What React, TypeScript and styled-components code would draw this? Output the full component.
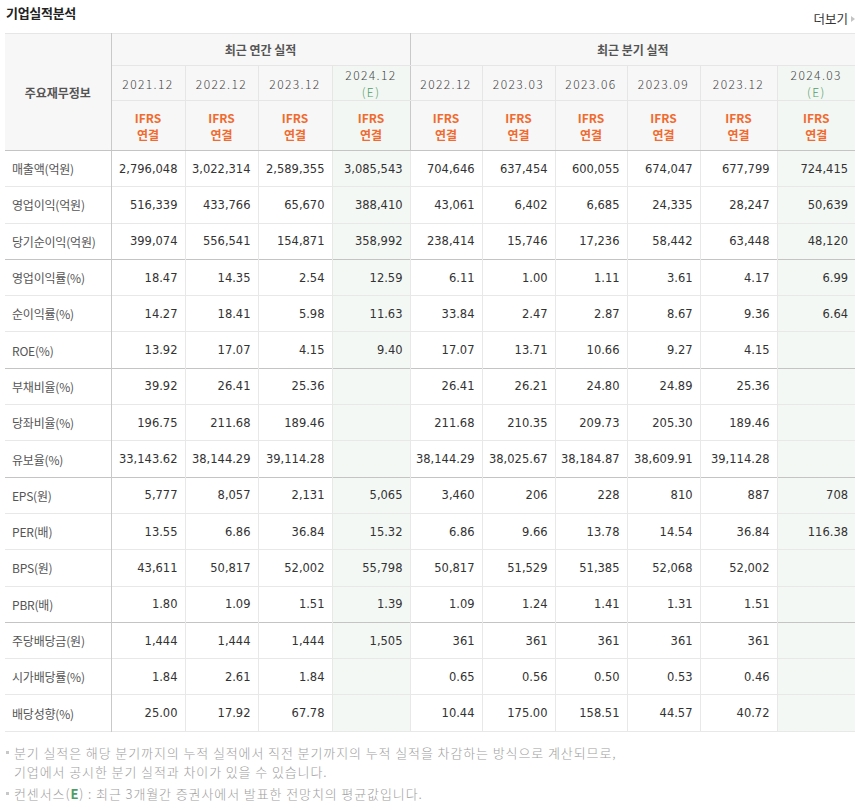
import { createGlobalStyle, styled } from 'styled-components';

const GlobalStyle = createGlobalStyle`
  body {
    margin: 0;
    background: #fff;
    font-family: "Noto Sans CJK KR", "DejaVu Sans", sans-serif;
  }
`;

const Wrapper = styled.div`
  width: 850px;
  padding: 0 3px 0 5px;
`;

const TopBar = styled.div`
  height: 33px;
  display: flex;
  justify-content: space-between;
  align-items: flex-start;
`;

const Title = styled.h3`
  margin: 3px 0 0 1px;
  font-size: 13px;
  font-weight: 700;
  color: #222;
  letter-spacing: -0.3px;
`;

const MoreLink = styled.a`
  margin-top: 9px;
  display: flex;
  align-items: center;
  gap: 3px;
  font-size: 12.5px;
  color: #333;
  text-decoration: none;
`;

const MoreArrow = styled.span`
  width: 0;
  height: 0;
  border-top: 3px solid transparent;
  border-bottom: 3px solid transparent;
  border-left: 4px solid #c4c4c4;
`;

const Table = styled.table`
  width: 850px;
  table-layout: fixed;
  border-collapse: collapse;
  border-top: 1px solid #c4c4c4;
  border-bottom: 1px solid #c4c4c4;
`;

const HeadCell = styled.th<{ $est?: boolean; $divider?: boolean; $bottom?: boolean }>`
  background: ${(p) => (p.$est ? '#f2f7f3' : '#f7f7f7')};
  border: 1px solid #e6e6e6;
  border-right-color: ${(p) => (p.$divider ? '#c9c9c9' : '#e6e6e6')};
  border-bottom-color: ${(p) => (p.$bottom ? '#c4c4c4' : '#e6e6e6')};
  padding: 0;
  text-align: center;
  font-weight: 400;
  color: #444;
`;

const KeyHead = styled(HeadCell)`
  font-size: 12px;
  font-weight: 700;
  color: #555;
  border-left: none;
`;

const GroupHead = styled(HeadCell)<{ $last?: boolean }>`
  height: 31px;
  font-size: 12px;
  font-weight: 700;
  color: #555;
  border-right-style: ${(p) => (p.$last ? 'none' : 'solid')};
`;

const YearHead = styled(HeadCell)`
  height: 34px;
  font-size: 12px;
  line-height: 17px;
  letter-spacing: 1.4px;
  font-weight: 300;
  color: #444;
  &:last-child {
    border-right: none;
  }
`;

const EstMark = styled.span`
  display: block;
  color: #4f9d63;
`;

const AcctHead = styled(HeadCell)`
  height: 49px;
  font-size: 12px;
  line-height: 17px;
  font-weight: 700;
  color: #f06b2f;
  &:last-child {
    border-right: none;
  }
`;

const Row = styled.tr<{ $groupEnd?: boolean }>`
  height: 36.3px;
  border-bottom: 1px solid ${(p) => (p.$groupEnd ? '#c4c4c4' : '#e8e8e8')};
`;

const Label = styled.td`
  padding: 0 0 0 7px;
  font-size: 12px;
  color: #555;
  letter-spacing: -0.2px;
  border-right: 1px solid #c9c9c9;
  white-space: nowrap;
`;

const Value = styled.td<{ $est?: boolean }>`
  padding: 0 7px 0 0;
  text-align: right;
  font-family: "DejaVu Sans", "Noto Sans CJK KR", sans-serif;
  font-size: 11.5px;
  color: #333;
  background: ${(p) => (p.$est ? '#f3f8f4' : '#fff')};
  border-right: 1px solid #e8e8e8;
  white-space: nowrap;
  &:last-child {
    border-right: none;
  }
`;

const Notes = styled.ul`
  list-style: none;
  margin: 11px 0 0;
  padding: 0;
`;

const Note = styled.li`
  position: relative;
  padding-left: 9px;
  font-size: 13px;
  line-height: 19.5px;
  letter-spacing: 0.9px;
  font-weight: 300;
  color: #9e9e9e;
  margin-bottom: 2px;
  &::before {
    content: '';
    position: absolute;
    left: 1px;
    top: 8px;
    width: 3px;
    height: 3px;
    background: #c8c8c8;
  }
`;

const NoteE = styled.b`
  color: #4f9d63;
  font-weight: 700;
`;

const widths = [106, 74, 73, 74, 78, 72, 73, 72, 73, 77, 78];

const periods = [
  { label: '2021.12', est: false },
  { label: '2022.12', est: false },
  { label: '2023.12', est: false },
  { label: '2024.12', est: true },
  { label: '2022.12', est: false },
  { label: '2023.03', est: false },
  { label: '2023.06', est: false },
  { label: '2023.09', est: false },
  { label: '2023.12', est: false },
  { label: '2024.03', est: true },
];

const rows: { name: string; values: string[]; groupEnd?: boolean }[] = [
  { name: '매출액(억원)', values: ['2,796,048', '3,022,314', '2,589,355', '3,085,543', '704,646', '637,454', '600,055', '674,047', '677,799', '724,415'] },
  { name: '영업이익(억원)', values: ['516,339', '433,766', '65,670', '388,410', '43,061', '6,402', '6,685', '24,335', '28,247', '50,639'] },
  { name: '당기순이익(억원)', values: ['399,074', '556,541', '154,871', '358,992', '238,414', '15,746', '17,236', '58,442', '63,448', '48,120'], groupEnd: true },
  { name: '영업이익률(%)', values: ['18.47', '14.35', '2.54', '12.59', '6.11', '1.00', '1.11', '3.61', '4.17', '6.99'] },
  { name: '순이익률(%)', values: ['14.27', '18.41', '5.98', '11.63', '33.84', '2.47', '2.87', '8.67', '9.36', '6.64'] },
  { name: 'ROE(%)', values: ['13.92', '17.07', '4.15', '9.40', '17.07', '13.71', '10.66', '9.27', '4.15', ''], groupEnd: true },
  { name: '부채비율(%)', values: ['39.92', '26.41', '25.36', '', '26.41', '26.21', '24.80', '24.89', '25.36', ''] },
  { name: '당좌비율(%)', values: ['196.75', '211.68', '189.46', '', '211.68', '210.35', '209.73', '205.30', '189.46', ''] },
  { name: '유보율(%)', values: ['33,143.62', '38,144.29', '39,114.28', '', '38,144.29', '38,025.67', '38,184.87', '38,609.91', '39,114.28', ''], groupEnd: true },
  { name: 'EPS(원)', values: ['5,777', '8,057', '2,131', '5,065', '3,460', '206', '228', '810', '887', '708'] },
  { name: 'PER(배)', values: ['13.55', '6.86', '36.84', '15.32', '6.86', '9.66', '13.78', '14.54', '36.84', '116.38'] },
  { name: 'BPS(원)', values: ['43,611', '50,817', '52,002', '55,798', '50,817', '51,529', '51,385', '52,068', '52,002', ''] },
  { name: 'PBR(배)', values: ['1.80', '1.09', '1.51', '1.39', '1.09', '1.24', '1.41', '1.31', '1.51', ''], groupEnd: true },
  { name: '주당배당금(원)', values: ['1,444', '1,444', '1,444', '1,505', '361', '361', '361', '361', '361', ''] },
  { name: '시가배당률(%)', values: ['1.84', '2.61', '1.84', '', '0.65', '0.56', '0.50', '0.53', '0.46', ''] },
  { name: '배당성향(%)', values: ['25.00', '17.92', '67.78', '', '10.44', '175.00', '158.51', '44.57', '40.72', ''] },
];

export default function App() {
  return (
    <>
      <GlobalStyle />
      <Wrapper>
        <TopBar>
          <Title>기업실적분석</Title>
          <MoreLink href="#">
            더보기
            <MoreArrow />
          </MoreLink>
        </TopBar>
        <Table>
          <colgroup>
            {widths.map((w, i) => (
              <col key={i} style={{ width: w }} />
            ))}
          </colgroup>
          <thead>
            <tr>
              <KeyHead rowSpan={3} $divider $bottom>
                주요재무정보
              </KeyHead>
              <GroupHead colSpan={4} $divider>
                최근 연간 실적
              </GroupHead>
              <GroupHead colSpan={6} $last>
                최근 분기 실적
              </GroupHead>
            </tr>
            <tr>
              {periods.map((p, i) => (
                <YearHead key={i} $est={p.est} $divider={i === 3}>
                  {p.label}
                  {p.est && <EstMark>(E)</EstMark>}
                </YearHead>
              ))}
            </tr>
            <tr>
              {periods.map((p, i) => (
                <AcctHead key={i} $est={p.est} $divider={i === 3} $bottom>
                  IFRS
                  <br />
                  연결
                </AcctHead>
              ))}
            </tr>
          </thead>
          <tbody>
            {rows.map((r) => (
              <Row key={r.name} $groupEnd={r.groupEnd}>
                <Label>{r.name}</Label>
                {r.values.map((v, i) => (
                  <Value key={i} $est={periods[i].est}>
                    {v}
                  </Value>
                ))}
              </Row>
            ))}
          </tbody>
        </Table>
        <Notes>
          <Note>
            분기 실적은 해당 분기까지의 누적 실적에서 직전 분기까지의 누적 실적을 차감하는 방식으로 계산되므로,
            <br />
            기업에서 공시한 분기 실적과 차이가 있을 수 있습니다.
          </Note>
          <Note>
            컨센서스(<NoteE>E</NoteE>) : 최근 3개월간 증권사에서 발표한 전망치의 평균값입니다.
          </Note>
        </Notes>
      </Wrapper>
    </>
  );
}
